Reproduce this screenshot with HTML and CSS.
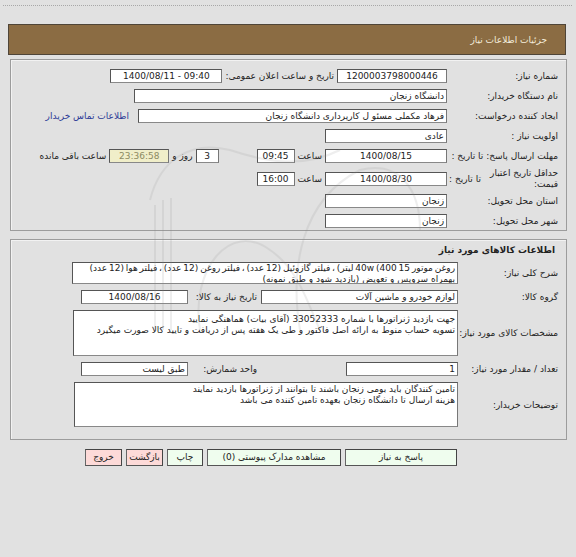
FILE: index.html
```html
<!DOCTYPE html>
<html lang="fa" dir="rtl">
<head>
<meta charset="utf-8">
<title>جزئیات اطلاعات نیاز</title>
<link rel="stylesheet" href="styles.css">
</head>
<body>
<div class="topline"></div>
<div class="header">جزئیات اطلاعات نیاز</div>

<div class="panel p1">
  <div class="row">
    <div class="lbl">شماره نیاز:</div>
    <div class="vals">
      <span class="box c w110">1200003798000446</span>
      <span class="txt">تاریخ و ساعت اعلان عمومی:</span>
      <span class="box c w112 ltr">1400/08/11 - 09:40</span>
    </div>
  </div>
  <div class="row">
    <div class="lbl">نام دستگاه خریدار:</div>
    <div class="vals"><span class="box w313">دانشگاه زنجان</span></div>
  </div>
  <div class="row">
    <div class="lbl">ایجاد کننده درخواست:</div>
    <div class="vals">
      <span class="box w309">فرهاد مکملی مسئو ل کارپرداری دانشگاه زنجان</span>
      <a class="link" href="#">اطلاعات تماس خریدار</a>
    </div>
  </div>
  <div class="row">
    <div class="lbl">اولویت نیاز :</div>
    <div class="vals"><span class="box w122">عادی</span></div>
  </div>
  <div class="row">
    <div class="lbl">مهلت ارسال پاسخ: تا تاریخ :</div>
    <div class="vals">
      <span class="box c w122">1400/08/15</span>
      <span class="txt">ساعت</span>
      <span class="box c w38">09:45</span>
      <span class="box c w23 ml">3</span>
      <span class="txt">روز و</span>
      <span class="box c w60 remain">23:36:58</span>
      <span class="txt">ساعت باقی مانده</span>
    </div>
  </div>
  <div class="row tall">
    <div class="lbl split"><span class="two">حداقل تاریخ اعتبار<br>قیمت:</span><span>تا تاریخ :</span></div>
    <div class="vals">
      <span class="box c w122">1400/08/30</span>
      <span class="txt">ساعت</span>
      <span class="box c w38">16:00</span>
    </div>
  </div>
  <div class="row">
    <div class="lbl">استان محل تحویل:</div>
    <div class="vals"><span class="box w122">زنجان</span></div>
  </div>
  <div class="row">
    <div class="lbl">شهر محل تحویل:</div>
    <div class="vals"><span class="box w122">زنجان</span></div>
  </div>
</div>

<div class="panel p2">
  <div class="title">اطلاعات کالاهای مورد نیاز</div>
  <div class="grid">
    <div class="lbl r1">شرح کلی نیاز:</div>
    <div class="area a1 r1"><span class="line">روغن موتور 15 400) 40w لیتر) ، فیلتر گازوئیل (12 عدد) ، فیلتر روغن (12 عدد) ، فیلتر هوا (12 عدد)</span><br>بهمراه سرویس و تعویض (بازدید شود و طبق نمونه)</div>

    <div class="lbl r2">گروه کالا:</div>
    <div class="r2 colb"><span class="box full">لوازم خودرو و ماشین آلات</span></div>
    <div class="lbl2 r2">تاریخ نیاز به کالا:</div>
    <div class="r2 cold"><span class="box c full">1400/08/16</span></div>

    <div class="lbl r3">مشخصات کالای مورد نیاز:</div>
    <div class="area a2 r3">جهت بازدید ژنراتورها با شماره 33052333 (آقای بیات) هماهنگی نمایید<br>تسویه حساب منوط به ارائه اصل فاکتور و طی یک هفته پس از دریافت و تایید کالا صورت میگیرد</div>

    <div class="lbl r4">تعداد / مقدار مورد نیاز:</div>
    <div class="r4 colb"><span class="box w112">1</span></div>
    <div class="lbl2 r4">واحد شمارش:</div>
    <div class="r4 cold"><span class="box full">طبق لیست</span></div>

    <div class="lbl r5">توضیحات خریدار:</div>
    <div class="area a3 r5">تامین کنندگان باید بومی زنجان باشند تا بتوانند از ژنراتورها بازدید نمایند<br>هزینه ارسال تا دانشگاه زنجان بعهده تامین کننده می باشد</div>
  </div>
</div>

<div class="buttons">
  <span class="btn green b1">پاسخ به نیاز</span>
  <span class="btn green b2">مشاهده مدارک پیوستی (0)</span>
  <span class="btn green b3">چاپ</span>
  <span class="btn pink b4">بازگشت</span>
  <span class="btn pink b5">خروج</span>
</div>

<div class="watermark" aria-hidden="true">
  <svg class="wm-logo" width="576" height="557" viewBox="0 0 576 557">
    <g fill="none" stroke="#8a8a8a" stroke-width="2">
      <path d="M150 200 C 160 160, 190 140, 230 150 C 260 160, 300 170, 340 150"/>
      <path d="M155 330 L155 205 M163 330 L163 200 M171 330 L171 198"/>
      <path d="M200 330 C 190 270, 230 220, 270 250 C 300 270, 310 310, 320 330"/>
      <path d="M300 330 C 290 270, 300 200, 360 170 C 400 160, 420 190, 420 230"/>
    </g>
  </svg>
</div>
</body>
</html>
```

FILE: styles.css
```css
html, body {
  margin: 0;
  padding: 0;
}
body {
  position: relative;
  background: #e1e1e1;
  font-family: "DejaVu Sans", sans-serif;
  font-size: 9px;
  color: #222;
  direction: rtl;
  width: 576px;
  height: 557px;
  overflow: hidden;
}
.topline {
  margin: 5px 4px 0 3px;
  border-top: 1px dotted #a8a8a8;
}
.header {
  margin: 18px 10px 0 8px;
  height: 29px;
  background: #8b6c43;
  border: 1px solid #4f4538;
  color: #f4ecdc;
  padding-right: 18px;
  display: flex;
  align-items: center;
  font-size: 9px;
}
.panel {
  margin: 4px 9px 0 10px;
  border: 1px solid #9c9c9c;
  box-shadow: inset 1px 1px 0 #f2f2f2;
}
.p1 {
  height: 172px;
  padding: 6px 8px 0 0;
  box-sizing: border-box;
}
.row {
  display: grid;
  grid-template-columns: 103px 1fr;
  column-gap: 8px;
  align-items: center;
  height: 20px;
}
.row.tall {
  height: 25px;
}
.lbl {
  white-space: nowrap;
  color: #222;
}
.split {
  display: flex;
  align-items: center;
  justify-content: space-between;
  margin-left: -6px;
}
.two {
  line-height: 11px;
  white-space: nowrap;
}
.vals {
  display: flex;
  align-items: center;
  gap: 3px;
}
.box {
  display: inline-block;
  box-sizing: border-box;
  height: 14px;
  line-height: 12px;
  background: #fff;
  border: 1px solid #555;
  border-right-color: #777;
  border-bottom-color: #888;
  padding: 0 2px;
  white-space: nowrap;
  overflow: hidden;
  font-size: 9px;
}
.c { text-align: center; }
.ltr { direction: ltr; }
.w23 { width: 23px; }
.w38 { width: 38px; }
.w60 { width: 60px; }
.w110 { width: 110px; }
.w112 { width: 112px; }
.w122 { width: 122px; }
.w309 { width: 309px; }
.w313 { width: 313px; }
.ml { margin-right: 35px; }
.remain {
  background: #f0eec9;
  color: #8c8a62;
}
.txt {
  white-space: nowrap;
}
.link {
  color: #2b3a96;
  text-decoration: none;
  margin-right: 6px;
}
.p2 {
  margin-top: 8px;
  height: 201px;
  box-sizing: border-box;
  padding: 0 8px 0 0;
}
.title {
  font-weight: bold;
  height: 22px;
  line-height: 21px;
  padding-right: 3px;
}
.grid {
  display: grid;
  grid-template-columns: 100px 197px 73px 107px;
  align-items: center;
}
.lbl2 {
  white-space: nowrap;
  padding-right: 4px;
}
.colb, .cold {
  display: flex;
}
.full { width: 100%; }
.area {
  grid-column: 2 / 5;
  background: #fff;
  border: 1px solid #555;
  border-right-color: #777;
  border-bottom-color: #888;
  line-height: 11px;
  padding: 0 2px;
  overflow: hidden;
  box-sizing: border-box;
}
.line {
  white-space: nowrap;
  word-spacing: -1px;
}
.a1 { height: 22px; width: 386px; }
.a2 { height: 46px; padding-top: 3px; width: 385px; }
.a3 { height: 45px; padding-top: 1px; width: 384px; }
.r2 { height: 26px; display: flex; align-items: center; }
.r4 { height: 26px; display: flex; align-items: center; }
.buttons {
  display: flex;
  gap: 4px;
  padding-right: 119px;
  margin-top: 9px;
}
.btn {
  box-sizing: border-box;
  height: 17px;
  line-height: 15px;
  text-align: center;
  border: 1px solid #444;
  border-left-color: #666;
  border-bottom-color: #555;
  white-space: nowrap;
  font-size: 9px;
}
.green { background: #effdee; }
.pink { background: #fddad8; }
.b1 { width: 112px; }
.b2 { width: 134px; }
.b3 { width: 36px; }
.b4 { width: 37px; }
.b5 { width: 37px; }

.watermark {
  position: absolute;
  inset: 0;
  pointer-events: none;
  opacity: 0.14;
}
.wm-logo {
  position: absolute;
  top: 0;
  left: 0;
}
```
